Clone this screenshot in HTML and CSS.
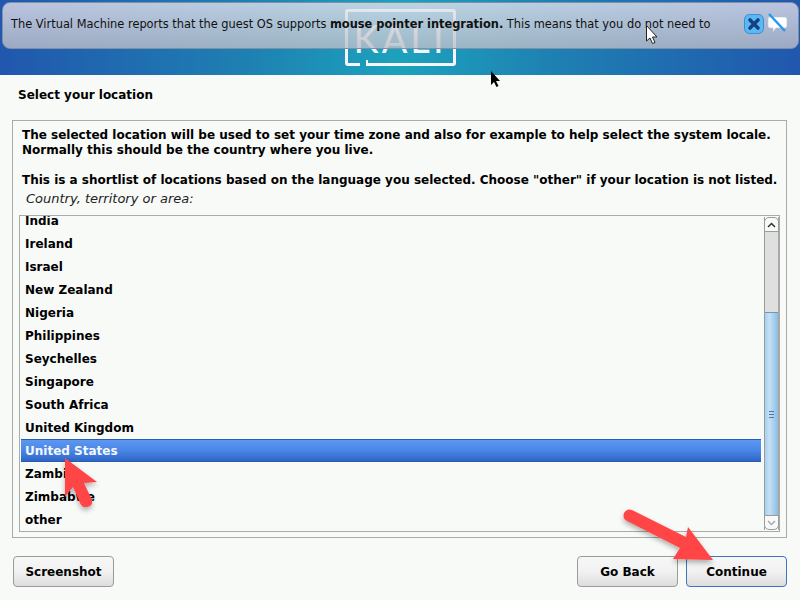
FILE: index.html
```html
<!DOCTYPE html>
<html lang="en">
<head>
    <meta charset="UTF-8">
    <meta name="viewport" content="width=device-width, initial-scale=1.0">
    <title>Select your location</title>
    <link rel="stylesheet" href="styles.css">
</head>
<body>
    <header class="banner">
        <div class="logo"><span class="logo-text">KALI</span></div>
    </header>

    <main class="page">
        <h1 class="page-title">Select your location</h1>

        <section class="frame">
            <p class="help">The selected location will be used to set your time zone and also for example to help select the system locale.<br>Normally this should be the country where you live.</p>
            <p class="help help-second">This is a shortlist of locations based on the language you selected. Choose "other" if your location is not listed.</p>
            <p class="list-label">Country, territory or area:</p>

            <div class="listbox">
                <ul class="rows">
                    <li>India</li>
                    <li>Ireland</li>
                    <li>Israel</li>
                    <li>New Zealand</li>
                    <li>Nigeria</li>
                    <li>Philippines</li>
                    <li>Seychelles</li>
                    <li>Singapore</li>
                    <li>South Africa</li>
                    <li>United Kingdom</li>
                    <li class="selected">United States</li>
                    <li>Zambia</li>
                    <li>Zimbabwe</li>
                    <li>other</li>
                </ul>
                <div class="scrollbar">
                    <div class="scroll-btn scroll-up">
                        <svg width="9" height="6" viewBox="0 0 9 6"><path d="M1 5 L4.5 1.5 L8 5" fill="none" stroke="#333" stroke-width="1.5"/></svg>
                    </div>
                    <div class="trough"></div>
                    <div class="thumb">
                        <span class="grip"></span><span class="grip"></span><span class="grip"></span>
                    </div>
                    <div class="scroll-btn scroll-down">
                        <svg width="9" height="6" viewBox="0 0 9 6"><path d="M1 1 L4.5 4.5 L8 1" fill="none" stroke="#aaa" stroke-width="1.5"/></svg>
                    </div>
                </div>
            </div>
        </section>

        <div class="buttons">
            <button type="button" class="btn">Screenshot</button>
            <div class="buttons-right">
                <button type="button" class="btn">Go Back</button>
                <button type="button" class="btn btn-focus">Continue</button>
            </div>
        </div>
    </main>

    <!-- things lying over the installer -->
    <div class="notify">
        <p class="notify-text">The Virtual Machine reports that the guest OS supports <b>mouse pointer integration.</b> This means that you do not need to</p>
        <div class="notify-icons">
            <svg class="notify-close" width="20" height="20" viewBox="0 0 20 20">
                <rect x="0.5" y="0.5" width="19" height="19" rx="5" fill="#5cb8f2" stroke="#3b8fd0"/>
                <path d="M6 6 L14 14 M14 6 L6 14" stroke="#12427f" stroke-width="3.6" stroke-linecap="round"/>
            </svg>
            <svg width="21" height="21" viewBox="0 0 21 21">
                <path d="M2 4 H18 Q20 4 20 6 V13 Q20 15 18 15 H9 L6 19 V15 H3 Q1 15 1 13 V6 Q1 4 2 4 Z" fill="#fff" stroke="#b5c0cc" stroke-width="0.6"/>
                <path d="M2 1 L18 18" stroke="#1e9bee" stroke-width="2.4"/>
            </svg>
        </div>
    </div>

    <svg class="overlay" width="800" height="600" viewBox="0 0 800 600">
        <defs>
            <filter id="soft" x="-20%" y="-20%" width="140%" height="140%">
                <feDropShadow dx="0" dy="3" stdDeviation="2.5" flood-color="#000" flood-opacity="0.3"/>
            </filter>
        </defs>
        <g filter="url(#soft)" fill="#ff4444">
            <path d="M65 458 L97 482 L84 483 L92 500 Q93 506 87 507 Q82 508 80 503 L73 487 L65 497 Z"/>
            <path d="M688 527 L713 560 L673 559 L680 548 L627 521 Q622 518 624 513 Q627 508 632 510 L686 537 Z"/>
        </g>
        <path d="M646.500 25.500 V41 L650 38 L652.500 43.500 L655 42.500 L652.500 37 H657 Z" fill="#fff" stroke="#222" stroke-width="1"/>
        <path d="M491 71 V85 L494 82 L496.500 87 L498.500 86 L496 81 H500 Z" fill="#000"/>
    </svg>
</body>
</html>
```

FILE: styles.css
```css
* {
    box-sizing: border-box;
}
body {
    margin: 0;
    width: 800px;
    height: 600px;
    overflow: hidden;
    position: relative;
    background-color: #f8faf8;
    font-family: "DejaVu Sans", sans-serif;
    font-size: 12px;
    color: #000;
}
.banner {
    height: 75px;
    display: flex;
    justify-content: center;
    padding-top: 9px;
    background: linear-gradient(90deg, #2157ae 0%, #1e7fb2 30%, #1ca2bd 50%, #1e7fb2 70%, #2157ae 100%);
}
.logo {
    position: relative;
    width: 111px;
    height: 57px;
    border: 3px solid #f2f6f8;
    border-radius: 3px;
    display: flex;
    align-items: center;
    justify-content: center;
}
.logo::after {
    content: "";
    position: absolute;
    left: 12px;
    bottom: -3px;
    width: 6px;
    height: 6px;
    background-color: #1c98bb;
    border-right: 2px solid #f2f6f8;
}
.logo-text {
    font-family: Lato, sans-serif;
    font-weight: 400;
    font-size: 38px;
    letter-spacing: 3px;
    color: #f2f6f8;
}
.page {
    padding: 0 13px 0 12px;
}
.page-title {
    margin: 0;
    padding: 13px 0 0 6px;
    height: 45px;
    font-size: 12px;
    line-height: 15px;
    font-weight: bold;
}
.frame {
    width: 775px;
    height: 418px;
    border: 1px solid #a8aba8;
    padding: 7px 6px 5px 9px;
    display: flex;
    flex-direction: column;
}
.help {
    margin: 0;
    font-weight: bold;
    line-height: 15px;
    white-space: nowrap;
}
.help-second {
    margin-top: 15px;
}
.list-label {
    margin: 4px 0 0 4px;
    font-style: italic;
    font-size: 13px;
    line-height: 14px;
    color: #222;
}
.listbox {
    margin: 9px 0 0 -3px;
    width: 761px;
    height: 317px;
    border: 1px solid #a8aba8;
    display: flex;
    overflow: hidden;
}
.rows {
    list-style: none;
    margin: -7px 0 0 0;
    padding: 0 0 0 1px;
    flex: 1;
    font-weight: bold;
}
.rows li {
    height: 23px;
    padding: 2px 0 0 4px;
    line-height: 21px;
    margin-right: 3px;
}
.rows .selected {
    color: #f4f8fc;
    background: linear-gradient(180deg, #5c97f0 0%, #4a86e6 50%, #2f66c8 100%);
    border-top: 1px solid #2a5cb0;
    border-bottom: 1px solid #2a5cb0;
    line-height: 19px;
}
.scrollbar {
    width: 15px;
    display: flex;
    flex-direction: column;
    border-left: 1px solid #9a9c9a;
    border-right: 1px solid #a4a6a4;
    margin-top: 1px;
    margin-bottom: 1px;
}
.scroll-btn {
    height: 15px;
    background: #f8faf8;
    border: 1px solid #9a9c9a;
    margin: 0 -1px;
    display: flex;
    align-items: center;
    justify-content: center;
}
.scroll-up {
    border-radius: 5px 5px 0 0;
}
.scroll-down {
    border-radius: 0 0 5px 5px;
}
.trough {
    height: 80px;
    background-color: #dedfde;
}
.thumb {
    flex: 1;
    background: linear-gradient(90deg, #a9d0ee 0%, #c4e0f5 35%, #a6cdec 70%, #8fbbe0 100%);
    border-top: 1px solid #5f9cc8;
    display: flex;
    flex-direction: column;
    align-items: center;
    justify-content: center;
    gap: 2px;
}
.grip {
    width: 5px;
    height: 1px;
    background-color: #4a78b0;
}
.buttons {
    display: flex;
    justify-content: space-between;
    margin-top: 18px;
    padding-left: 1px;
}
.buttons-right {
    display: flex;
    gap: 8px;
}
.btn {
    width: 101px;
    height: 31px;
    padding: 0;
    font-family: inherit;
    font-size: 12px;
    font-weight: bold;
    color: #000;
    border: 1px solid #9a9c9a;
    border-radius: 4px;
    background: linear-gradient(180deg, #f6f7f6 0%, #f0f1f0 50%, #dcdddc 100%);
}
.btn-focus {
    border-color: #3f74c4;
}
.notify {
    position: absolute;
    left: 2px;
    top: 2px;
    width: 797px;
    height: 47px;
    border: 1px solid #7f90a6;
    border-radius: 8px;
    background: linear-gradient(180deg, rgba(234, 229, 239, 0.76) 0%, rgba(188, 190, 200, 0.8) 100%);
    display: flex;
    align-items: center;
    justify-content: space-between;
    padding: 0 10px 4px 8px;
}
.notify-text {
    margin: 0;
    font-size: 11.4px;
    line-height: 14px;
    white-space: nowrap;
    color: #111;
}
.notify-icons {
    display: flex;
    align-items: center;
    gap: 3px;
}
.overlay {
    position: absolute;
    left: 0;
    top: 0;
    pointer-events: none;
}
```
